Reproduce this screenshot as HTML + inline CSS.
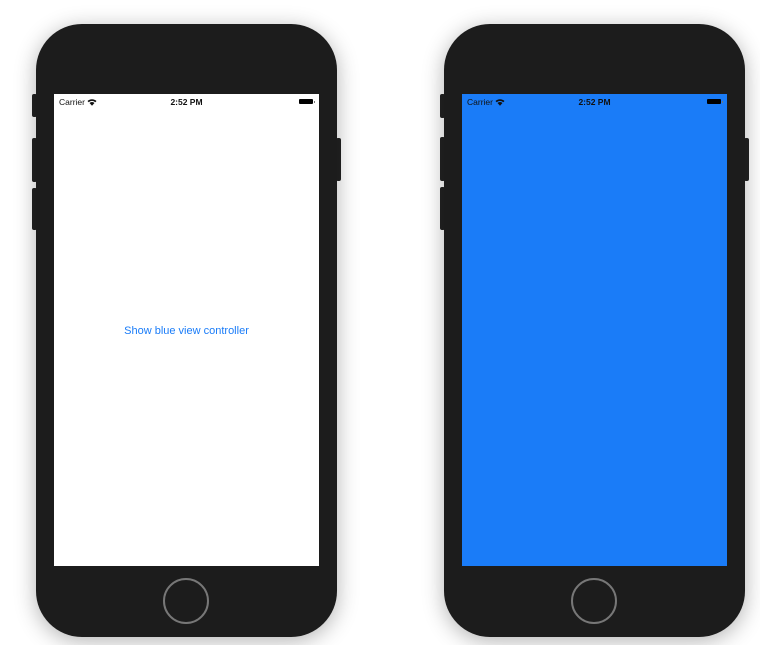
<!DOCTYPE html>
<html><head><style>
body{margin:0;width:760px;height:645px;background:#fff;position:relative;overflow:hidden;font-family:"Liberation Sans",sans-serif}
.ph{position:absolute;top:24px;width:301px;height:613px;background:#1c1c1c;border-radius:46px;box-shadow:0 4px 22px rgba(0,0,0,.3)}
.btn{position:absolute;width:5px;background:#222;border-radius:2px}
.scr{position:absolute;left:18px;top:70px;width:265px;height:472px;background:#fff}
.sb{position:absolute;top:0;left:0;right:0;height:16px;font-size:8.5px;color:#111}
.car{position:absolute;left:5px;top:3px}
.tm{position:absolute;left:0;right:0;text-align:center;top:3px;font-weight:bold}
.bat{position:absolute;right:6px;top:5px;width:14px;height:5px;background:#000;border-radius:1px}
.bat:after{content:"";position:absolute;right:-2px;top:1.5px;width:1px;height:2px;background:#777}
.home{position:absolute;left:127px;top:554px;width:42px;height:42px;border:2px solid #777;border-radius:50%}
.lbl{position:absolute;left:0;right:0;top:231px;text-align:center;color:#1a7cf8;font-size:11px}
</style></head><body>
<div class="btn" style="left:32px;top:94px;height:23px"></div>
<div class="btn" style="left:32px;top:138px;height:44px"></div>
<div class="btn" style="left:32px;top:188px;height:42px"></div>
<div class="btn" style="left:336px;top:138px;height:43px"></div>
<div class="btn" style="left:440px;top:94px;height:24px"></div>
<div class="btn" style="left:440px;top:137px;height:44px"></div>
<div class="btn" style="left:440px;top:187px;height:43px"></div>
<div class="btn" style="left:744px;top:138px;height:43px"></div>
<div class="ph" style="left:36px">
<div class="scr">
<div class="sb"><span class="car">Carrier <svg width="10" height="8" viewBox="0 0 10 8" style="vertical-align:-1px"><path d="M0.5 3A6.5 6.5 0 0 1 9.5 3L8.3 4.2A4.8 4.8 0 0 0 1.7 4.2Z M2.5 5A3.6 3.6 0 0 1 7.5 5L5 7.8Z" fill="#111"/></svg></span><span class="tm">2:52 PM</span><span class="bat"></span></div>
<div class="lbl">Show blue view controller</div>
</div>
<div class="home"></div>
</div>
<div class="ph" style="left:444px">
<div class="scr" style="background:#1a7cf8">
<div class="sb"><span class="car">Carrier <svg width="10" height="8" viewBox="0 0 10 8" style="vertical-align:-1px"><path d="M0.5 3A6.5 6.5 0 0 1 9.5 3L8.3 4.2A4.8 4.8 0 0 0 1.7 4.2Z M2.5 5A3.6 3.6 0 0 1 7.5 5L5 7.8Z" fill="#111"/></svg></span><span class="tm">2:52 PM</span><span class="bat"></span></div>
</div>
<div class="home"></div>
</div>
</body></html>
